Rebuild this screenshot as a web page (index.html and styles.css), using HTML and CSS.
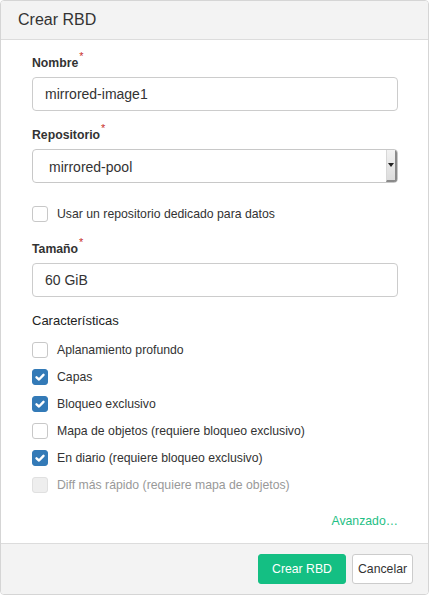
FILE: index.html
```html
<!DOCTYPE html>
<html lang="es">
<head>
<meta charset="utf-8">
<title>Crear RBD</title>
<link rel="stylesheet" href="styles.css">
</head>
<body>
<div class="modal">
  <div class="modal-header">Crear RBD</div>
  <div class="modal-body">
    <div class="group">
      <label class="label">Nombre<span class="req">*</span></label>
      <div class="input">mirrored-image1</div>
    </div>
    <div class="group">
      <label class="label">Repositorio<span class="req">*</span></label>
      <div class="select">
        <span class="select-text">mirrored-pool</span>
        <span class="select-btn"><span class="caret"></span></span>
      </div>
    </div>
    <div class="check single">
      <span class="box"></span><span class="check-text">Usar un repositorio dedicado para datos</span>
    </div>
    <div class="group">
      <label class="label">Tamaño<span class="req">*</span></label>
      <div class="input">60 GiB</div>
    </div>
    <div class="features">
      <div class="label plain">Características</div>
      <div class="check"><span class="box"></span><span class="check-text">Aplanamiento profundo</span></div>
      <div class="check"><span class="box on"><svg viewBox="0 0 16 16" width="16" height="16"><path d="M4.5 8.3 L7 10.5 L11.5 5.8" fill="none" stroke="#fff" stroke-width="2.4" stroke-linecap="round" stroke-linejoin="round"/></svg></span><span class="check-text">Capas</span></div>
      <div class="check"><span class="box on"><svg viewBox="0 0 16 16" width="16" height="16"><path d="M4.5 8.3 L7 10.5 L11.5 5.8" fill="none" stroke="#fff" stroke-width="2.4" stroke-linecap="round" stroke-linejoin="round"/></svg></span><span class="check-text">Bloqueo exclusivo</span></div>
      <div class="check"><span class="box"></span><span class="check-text">Mapa de objetos (requiere bloqueo exclusivo)</span></div>
      <div class="check"><span class="box on"><svg viewBox="0 0 16 16" width="16" height="16"><path d="M4.5 8.3 L7 10.5 L11.5 5.8" fill="none" stroke="#fff" stroke-width="2.4" stroke-linecap="round" stroke-linejoin="round"/></svg></span><span class="check-text">En diario (requiere bloqueo exclusivo)</span></div>
      <div class="check disabled"><span class="box"></span><span class="check-text">Diff más rápido (requiere mapa de objetos)</span></div>
    </div>
    <div class="advanced"><a class="link">Avanzado…</a></div>
  </div>
  <div class="modal-footer">
    <button class="btn btn-primary">Crear RBD</button>
    <button class="btn btn-default">Cancelar</button>
  </div>
</div>
</body>
</html>
```

FILE: styles.css
```css
* { box-sizing: border-box; }
html, body { margin: 0; padding: 0; background: #fff; }
body {
  font-family: "Liberation Sans", Arial, sans-serif;
  font-size: 12.25px;
  color: #333;
  line-height: 18px;
}
.modal {
  width: 429px;
  height: 595px;
  border: 1px solid #d5d5d5;
  border-radius: 4px;
  display: flex;
  flex-direction: column;
  overflow: hidden;
}
.modal-header {
  height: 39px;
  flex: none;
  background: #f3f3f3;
  border-bottom: 1px solid #dcdcdc;
  padding: 9px 0 0 17px;
  font-size: 16px;
  line-height: 20px;
  color: #333;
}
.modal-body {
  flex: 1;
  padding: 14px 30px 0 31px;
}
.group { margin-bottom: 15px; }
.label {
  display: block;
  font-weight: bold;
  margin-bottom: 5px;
  color: #333;
}
.req {
  color: #c9302c;
  font-weight: normal;
  font-size: 11px;
  vertical-align: 7px;
  line-height: 0;
  margin-left: 1px;
}
.input {
  height: 34px;
  border: 1px solid #ccc;
  border-radius: 4px;
  padding: 0 12px;
  font-size: 14px;
  line-height: 32px;
  color: #333;
}
.select {
  height: 34px;
  border: 1px solid #c8c8c8;
  border-radius: 4px;
  display: flex;
  align-items: stretch;
  font-size: 14px;
  color: #333;
  overflow: hidden;
}
.select-text { flex: 1; padding-left: 16px; line-height: 34px; }
.select-btn {
  width: 11px;
  background: linear-gradient(#f2f2f2, #dcdcdc);
  border-left: 1px solid #d8d8d8;
  border-right: 2px solid #8a8a8a;
  border-bottom: 2px solid #8a8a8a;
  display: flex;
  align-items: center;
  justify-content: center;
}
.caret {
  width: 0; height: 0;
  border-left: 3px solid transparent;
  border-right: 3px solid transparent;
  border-top: 4px solid #222;
}
.check {
  display: flex;
  align-items: center;
  height: 27px;
}
.check.single { margin-top: 17px; margin-bottom: 13px; }
.box {
  width: 16px;
  height: 16px;
  border: 1px solid #c8c8c8;
  border-radius: 3px;
  background: #fff;
  flex: none;
  margin-right: 9px;
  display: flex;
}
.box.on { background: #337ab7; border-color: #337ab7; }
.box.on svg { margin: -1px; }
.check.disabled .box { background: #eee; border-color: #e0e0e0; }
.check.disabled .check-text { color: #999; }
.label.plain { font-weight: normal; font-size: 13px; margin-bottom: 6px; color: #222; }
.advanced {
  text-align: right;
  margin-top: 14px;
}
.link { color: #1fbf85; text-decoration: none; }
.modal-footer {
  height: 51px;
  flex: none;
  background: #f3f3f3;
  border-top: 1px solid #dcdcdc;
  display: flex;
  justify-content: flex-end;
  align-items: flex-start;
  padding: 10px 15px 0 0;
  gap: 6px;
}
.btn {
  font-family: "Liberation Sans", Arial, sans-serif;
  font-size: 12.25px;
  height: 30px;
  border-radius: 3px;
  padding: 0 10px;
  cursor: pointer;
}
.btn-primary {
  background: #14bf83;
  border: 1px solid #14bf83;
  color: #fff;
  width: 88px;
}
.btn-default {
  background: #fff;
  border: 1px solid #ccc;
  color: #333;
  padding: 0 5px;
  width: 61px;
}
```
